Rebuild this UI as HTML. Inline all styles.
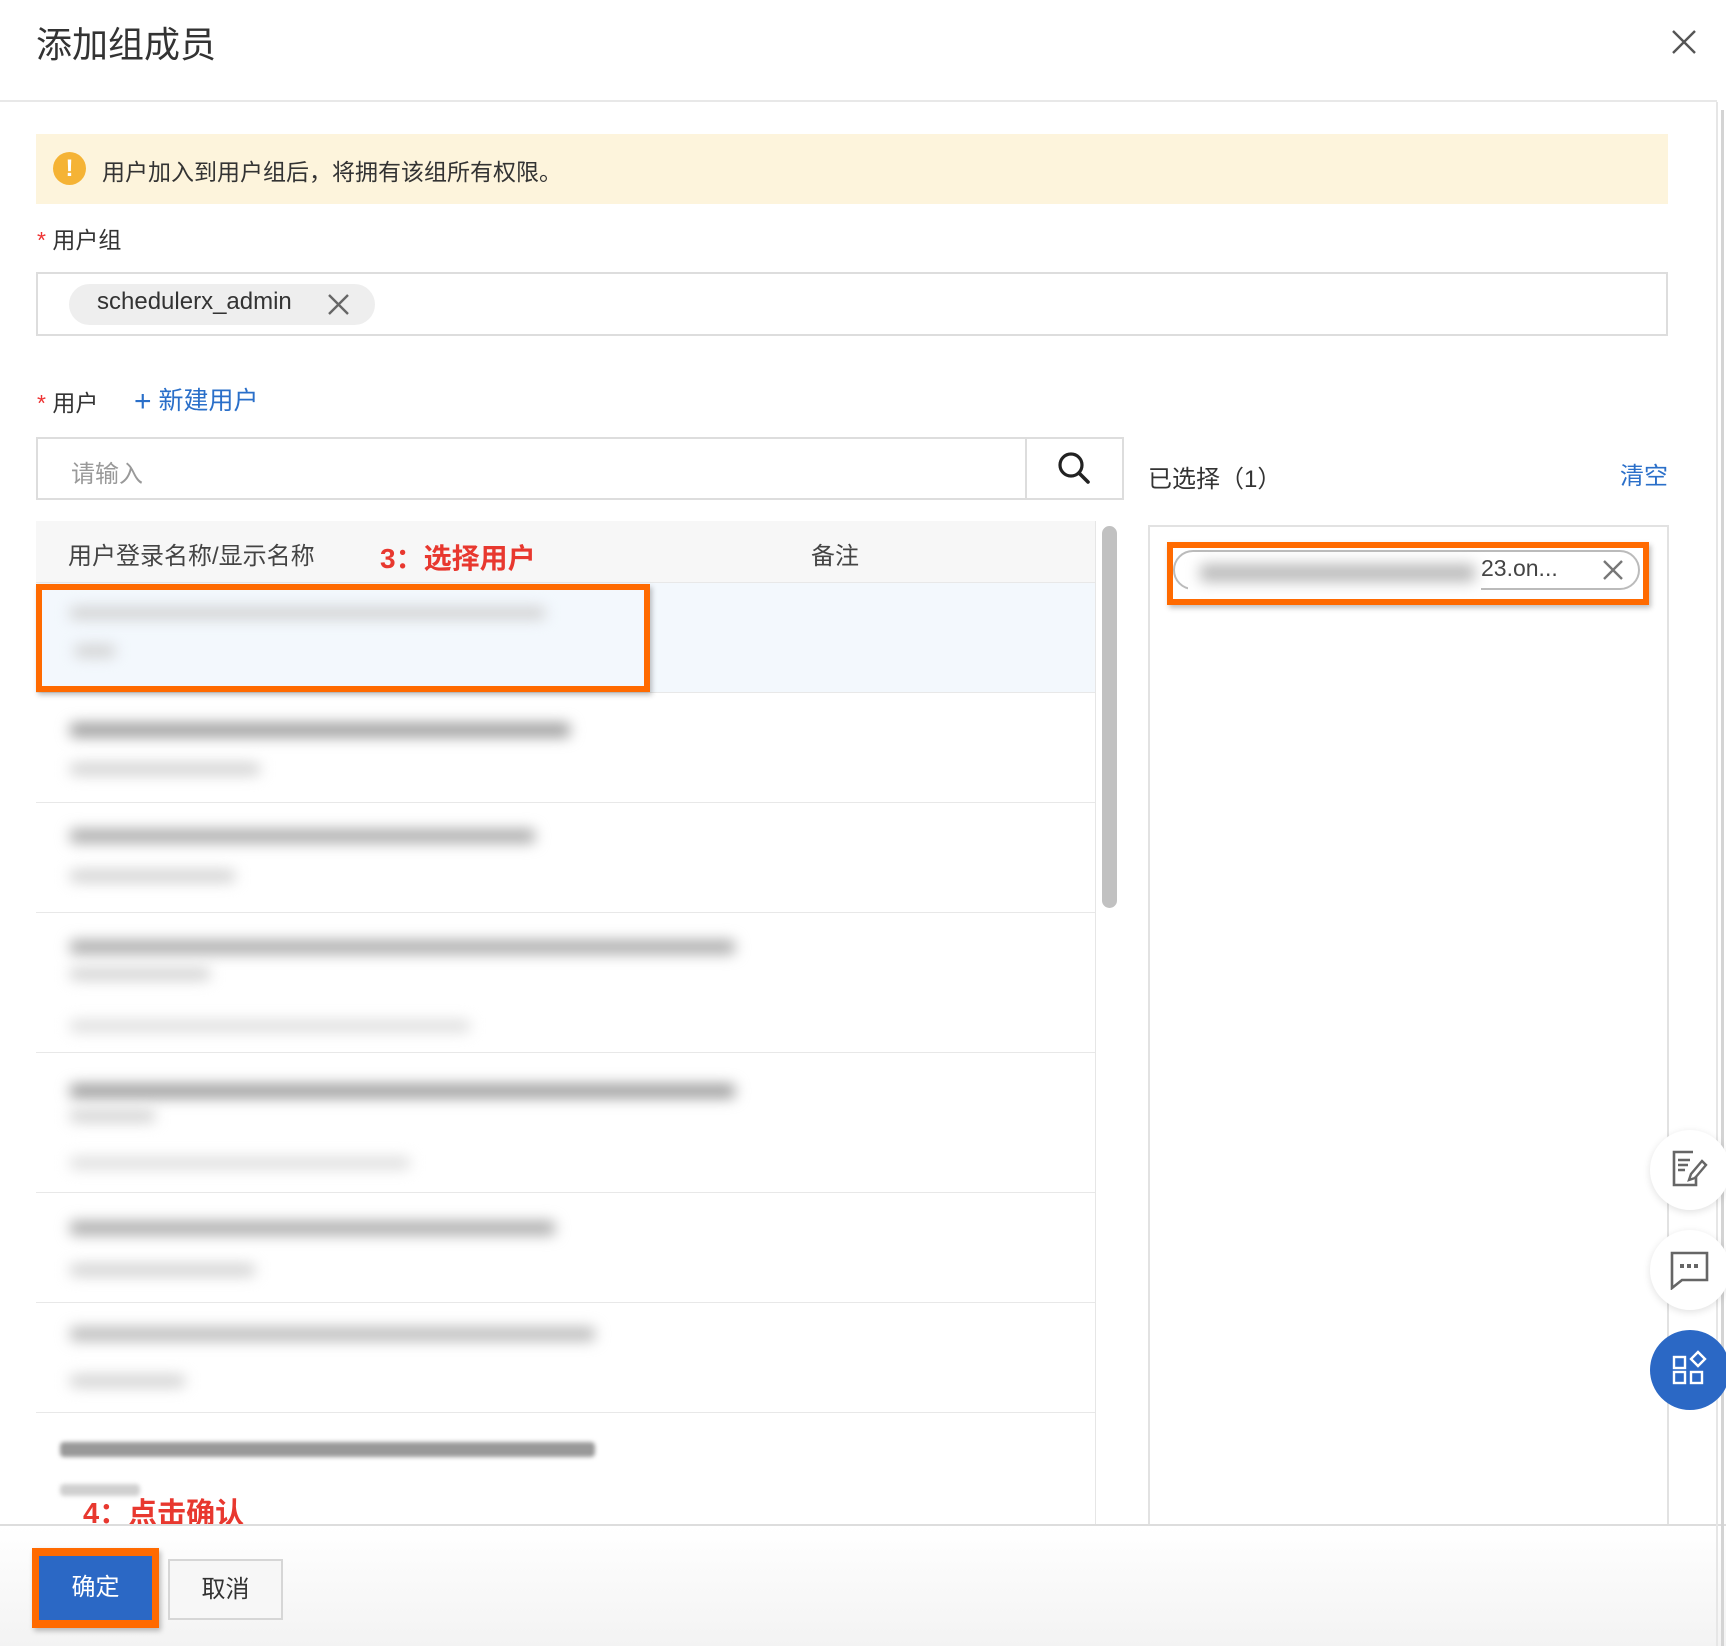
<!DOCTYPE html>
<html><head><meta charset="utf-8">
<style>
*{box-sizing:border-box;margin:0;padding:0}
body{width:1726px;height:1646px;overflow:hidden;background:#fff;font-family:"Liberation Sans","Noto Sans CJK SC",sans-serif;color:#333;position:relative}
.a{position:absolute}
.bar{position:absolute;height:14px;background:#9a9a9a;filter:blur(7px);border-radius:4px}
.bar.l{background:#d0d0d0;height:12px}
.row{position:absolute;left:36px;width:1059px;border-bottom:1px solid #e8e8e8}
</style></head><body>
<div class="a" style="left:36px;top:16px;font-size:36px;color:#333">添加组成员</div>
<svg class="a" style="left:1671px;top:29px" width="26" height="26" viewBox="0 0 26 26"><path d="M2 2L24 24M24 2L2 24" stroke="#555" stroke-width="2.4"/></svg>
<div class="a" style="left:0;top:100px;width:1717px;height:2px;background:#e8e8e8"></div>

<div class="a" style="left:36px;top:134px;width:1632px;height:70px;background:#fdf4dc"></div>
<div class="a" style="left:53px;top:152px;width:33px;height:33px;border-radius:50%;background:#f5b335;color:#fff;font-weight:bold;font-size:24px;text-align:center;line-height:33px">!</div>
<div class="a" style="left:102px;top:153px;font-size:23px;color:#333">用户加入到用户组后，将拥有该组所有权限。</div>

<div class="a" style="left:37px;top:221px;font-size:23px"><span style="color:#e33">*</span> 用户组</div>
<div class="a" style="left:36px;top:272px;width:1632px;height:64px;border:2px solid #ddd"></div>
<div class="a" style="left:69px;top:284px;width:306px;height:41px;border-radius:21px;background:#eeeeee"></div>
<div class="a" style="left:97px;top:288px;font-size:24px;color:#333">schedulerx_admin</div>
<svg class="a" style="left:327px;top:293px" width="23" height="23" viewBox="0 0 23 23"><path d="M2 2L21 21M21 2L2 21" stroke="#666" stroke-width="2.4"/></svg>

<div class="a" style="left:37px;top:384px;font-size:23px"><span style="color:#e33">*</span> 用户</div>
<div class="a" style="left:134px;top:381px;font-size:25px;color:#2a6fc9"><span style="font-size:30px;line-height:24px;vertical-align:-2px">+</span> 新建用户</div>

<div class="a" style="left:36px;top:437px;width:1088px;height:63px;border:2px solid #ddd"></div>
<div class="a" style="left:1025px;top:437px;width:2px;height:63px;background:#ddd"></div>
<div class="a" style="left:71px;top:454px;font-size:24px;color:#999">请输入</div>
<svg class="a" style="left:1057px;top:451px" width="34" height="34" viewBox="0 0 34 34"><circle cx="14" cy="14" r="11" fill="none" stroke="#222" stroke-width="3.2"/><path d="M22 22L31 31" stroke="#222" stroke-width="3.6" stroke-linecap="round"/></svg>

<div class="a" style="left:1148px;top:459px;font-size:24px">已选择（1）</div>
<div class="a" style="left:1620px;top:456px;font-size:24px;color:#2a6fc9">清空</div>

<div class="a" style="left:1148px;top:525px;width:521px;height:1010px;border:2px solid #e2e2e2"></div>
<div class="a" style="left:1173px;top:550px;width:467px;height:40px;border:2px solid #bbb;border-radius:20px"></div>
<div class="a" style="left:1188px;top:556px;width:293px;height:36px;background:#fff"></div>
<div class="bar" style="left:1200px;top:564px;width:275px;height:18px;background:#bbb"></div>
<div class="a" style="left:1481px;top:555px;font-size:23px;color:#444">23.on...</div>
<svg class="a" style="left:1602px;top:559px" width="22" height="22" viewBox="0 0 22 22"><path d="M2 2L20 20M20 2L2 20" stroke="#777" stroke-width="2.4"/></svg>
<div class="a" style="left:1167px;top:542px;width:482px;height:63px;border:6px solid #ff6a00;box-shadow:2px 3px 5px rgba(0,0,0,.25)"></div>

<div class="a" style="left:36px;top:521px;width:1059px;height:62px;background:#f7f7f7;border-bottom:1px solid #e8e8e8"></div>
<div class="a" style="left:68px;top:536px;font-size:24px;color:#444">用户登录名称/显示名称</div>
<div class="a" style="left:380px;top:537px;font-size:28px;font-weight:bold;color:#e8382f">3：选择用户</div>
<div class="a" style="left:811px;top:536px;font-size:24px;color:#444">备注</div>
<div class="a" style="left:1095px;top:521px;width:1px;height:1004px;background:#e6e6e6"></div>
<div class="a" style="left:1102px;top:526px;width:15px;height:382px;border-radius:8px;background:#c1c1c1"></div>

<div class="row" style="top:583px;height:110px;background:#f3f8fd"></div>
<div class="bar l" style="left:70px;top:607px;width:475px"></div>
<div class="bar l" style="left:75px;top:645px;width:40px"></div>
<div class="row" style="top:693px;height:110px"></div>
<div class="bar" style="left:70px;top:723px;width:500px"></div>
<div class="bar l" style="left:70px;top:763px;width:190px"></div>
<div class="row" style="top:803px;height:110px"></div>
<div class="bar" style="left:70px;top:829px;width:465px;background:#aaa"></div>
<div class="bar l" style="left:70px;top:870px;width:165px"></div>
<div class="row" style="top:913px;height:140px"></div>
<div class="bar" style="left:70px;top:940px;width:665px;background:#aaa"></div>
<div class="bar l" style="left:70px;top:968px;width:140px"></div>
<div class="bar l" style="left:70px;top:1020px;width:400px;background:#ddd"></div>
<div class="row" style="top:1053px;height:140px"></div>
<div class="bar" style="left:70px;top:1084px;width:665px"></div>
<div class="bar l" style="left:70px;top:1110px;width:85px"></div>
<div class="bar l" style="left:70px;top:1157px;width:340px;background:#ddd"></div>
<div class="row" style="top:1193px;height:110px"></div>
<div class="bar" style="left:70px;top:1221px;width:485px;background:#aaa"></div>
<div class="bar l" style="left:70px;top:1264px;width:185px"></div>
<div class="row" style="top:1303px;height:110px"></div>
<div class="bar" style="left:70px;top:1327px;width:525px;background:#bbb"></div>
<div class="bar l" style="left:70px;top:1375px;width:115px"></div>
<div class="bar" style="left:60px;top:1442px;width:535px;background:#999;filter:blur(2px);height:15px"></div>
<div class="bar l" style="left:60px;top:1484px;width:80px;filter:blur(2px)"></div>
<div class="a" style="left:36px;top:584px;width:614px;height:108px;border:6px solid #ff6a00;box-shadow:2px 3px 5px rgba(0,0,0,.25)"></div>
<div class="a" style="left:83px;top:1490px;font-size:29px;font-weight:bold;color:#e8382f">4：点击确认</div>

<div class="a" style="left:0;top:1524px;width:1726px;height:122px;background:linear-gradient(#fff,#f3f3f3);border-top:2px solid #ddd"></div>
<div class="a" style="left:32px;top:1548px;width:127px;height:80px;background:#ff6a00;box-shadow:2px 3px 5px rgba(0,0,0,.25)"></div>
<div class="a" style="left:39px;top:1556px;width:113px;height:64px;background:#2b68c5;color:#fff;font-size:24px;text-align:center;line-height:64px">确定</div>
<div class="a" style="left:168px;top:1559px;width:115px;height:61px;border:2px solid #d6d6d6;background:#f7f7f7;font-size:24px;text-align:center;line-height:57px;color:#333">取消</div>

<div class="a" style="left:1716px;top:102px;width:2px;height:1544px;background:#e6e6e6"></div>
<div class="a" style="left:1721px;top:110px;width:3px;height:1536px;background:#d4d4d4"></div>

<div class="a" style="left:1650px;top:1130px;width:80px;height:80px;border-radius:50%;background:#fff;box-shadow:0 2px 8px rgba(0,0,0,.12)"></div>
<svg class="a" style="left:1669px;top:1149px" width="40" height="40" viewBox="0 0 40 40"><path d="M24 3H5v33h22V27" fill="none" stroke="#666" stroke-width="2.6"/><path d="M9 11h12M9 16h10M9 21h7" stroke="#666" stroke-width="2.6"/><path d="M33 12l4 4-11 13-6 2 2-6z" fill="none" stroke="#666" stroke-width="2.4"/></svg>
<div class="a" style="left:1650px;top:1230px;width:80px;height:80px;border-radius:50%;background:#fff;box-shadow:0 2px 8px rgba(0,0,0,.12)"></div>
<svg class="a" style="left:1669px;top:1250px" width="40" height="40" viewBox="0 0 40 40"><path d="M3 3h35v27H13l-10 8z" fill="none" stroke="#666" stroke-width="2.6"/><rect x="11" y="14" width="4" height="4" fill="#666"/><rect x="18" y="14" width="4" height="4" fill="#666"/><rect x="25" y="14" width="4" height="4" fill="#666"/></svg>
<div class="a" style="left:1650px;top:1330px;width:80px;height:80px;border-radius:50%;background:#2b68c5"></div>
<svg class="a" style="left:1672px;top:1350px" width="40" height="40" viewBox="0 0 40 40"><rect x="2" y="7" width="11" height="11" fill="none" stroke="#fff" stroke-width="2.4"/><rect x="2" y="22" width="11" height="11" fill="none" stroke="#fff" stroke-width="2.4"/><rect x="19" y="22" width="11" height="11" fill="none" stroke="#fff" stroke-width="2.4"/><path d="M26 2l7 7-7 7-7-7z" fill="none" stroke="#fff" stroke-width="2.4"/></svg>
</body></html>
